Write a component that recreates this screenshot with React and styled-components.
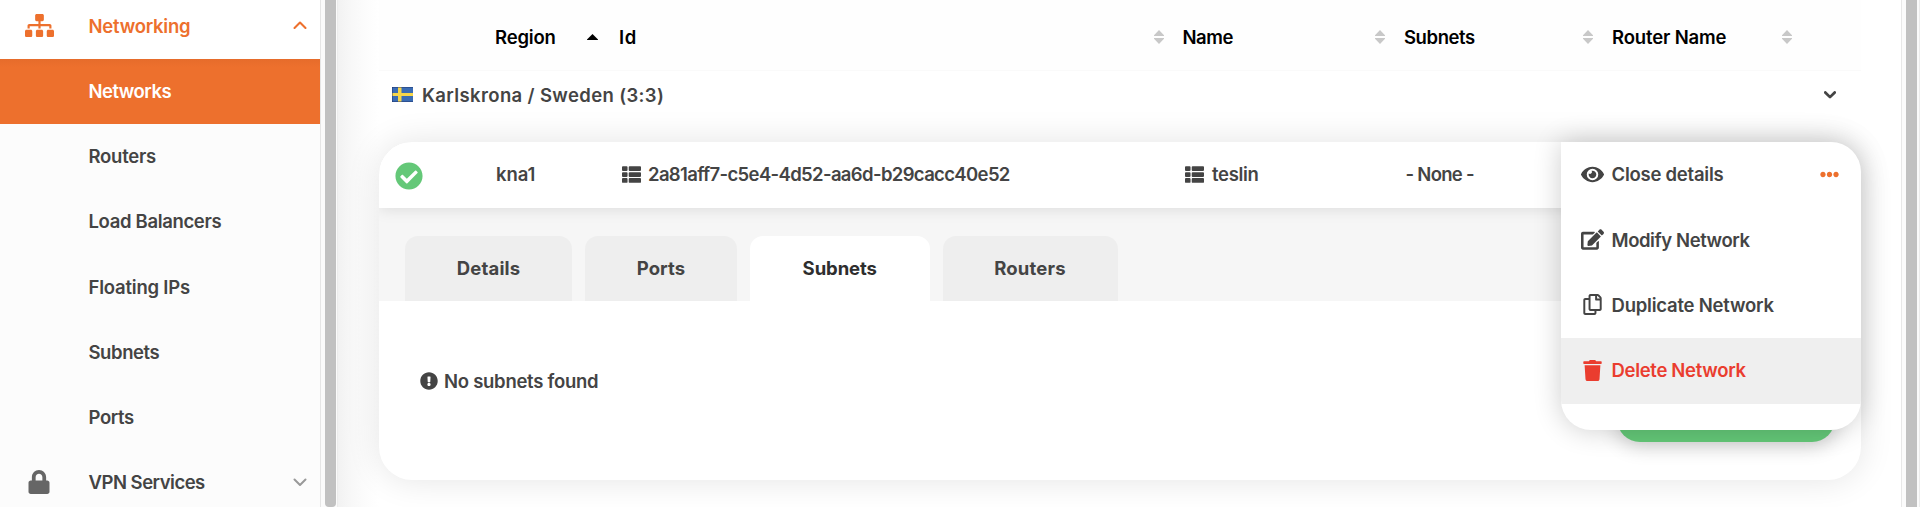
import React from "react";
import styled, { createGlobalStyle } from "styled-components";
import {
  FaSitemap, FaLock, FaThList, FaEye, FaEdit, FaRegCopy, FaTrash,
  FaExclamationCircle, FaEllipsisH, FaCheckCircle,
} from "react-icons/fa";

const Global = createGlobalStyle`
  * { box-sizing: border-box; }
  body { margin: 0; overflow: hidden; background: #fff; }
`;

const Page = styled.div`
  display: flex;
  width: 1920px;
  height: 507px;
  overflow: hidden;
  color: #444;
  font: 600 18.5px/24px Inter, "Liberation Sans", sans-serif;
`;

const Label = styled.span`
  white-space: nowrap;
  letter-spacing: ${(p) => p.$ls || 0}px;
`;

/* Sidebar */
const Sidebar = styled.nav`
  display: flex;
  flex-direction: column;
  flex: none;
  width: 321px;
  background: #fcfcfc;
  border-right: 1px solid #e6e6e6;
`;

const NavGroup = styled.div`
  display: grid;
  grid-template-columns: 88.5px 1fr 27px;
  align-items: center;
  flex: none;
  height: ${(p) => p.$height}px;
  padding-bottom: ${(p) => p.$bottom || 0}px;
  background: ${(p) => (p.$open ? "#fff" : "transparent")};
  color: ${(p) => (p.$open ? "#ed702d" : "#444")};
`;

const NavIcon = styled.span`
  display: flex;
  justify-content: center;
  padding-right: 10px;
  color: ${(p) => p.$color};
`;

const NavItem = styled.a`
  display: flex;
  align-items: center;
  flex: none;
  height: 65.3px;
  padding: 0 0 2px 88.5px;
  color: ${(p) => (p.$active ? "#fff" : "#444")};
  background: ${(p) =>
    p.$active ? "linear-gradient(#e66c2b, #ed702d 8px)" : "transparent"};
`;

/* Scroll bars */
const Track = styled.div`
  flex: none;
  width: ${(p) => p.$width}px;
  padding-left: 4px;
  background: #fbfbfb;
  border-left: ${(p) => (p.$edge ? "1px solid #e8e8e8" : "0")};
  border-right: 1px solid #ececec;
`;

const Thumb = styled.div`
  width: 11px;
  height: 100%;
  background: #c1c1c1;
  border-radius: ${(p) => (p.$rounded ? "0 0 4px 4px" : "0")};
`;

/* Main area */
const Main = styled.main`
  flex: 1;
  min-width: 0;
  padding: 0 40px 0 41px;
  background: linear-gradient(90deg, #f2f2f2, #f8f8f8 14px, #fcfcfc 28px, #fff 41px);
`;

const columns = "116px 124px 563.5px 221.5px 208px 1fr";

const HeadRow = styled.div`
  display: grid;
  grid-template-columns: ${columns};
  align-items: center;
  height: 71px;
  padding-top: 4px;
  color: #000;
  background: #fefefe;
  border-bottom: 1px solid #fafafa;
`;

const HeadCell = styled.div`
  display: flex;
  align-items: center;
  justify-content: space-between;
  padding-right: ${(p) => p.$pad}px;
`;

const RegionRow = styled.div`
  display: flex;
  align-items: center;
  justify-content: space-between;
  height: 71px;
  padding: 0 25px 24px 13px;
`;

const RegionName = styled.div`
  display: flex;
  align-items: center;
  gap: 9px;
`;

const Card = styled.section`
  position: relative;
  height: 338px;
  border-radius: 33px;
  background: #fff;
  box-shadow: 0 0 34px rgba(0, 0, 0, 0.11);
`;

const CardBody = styled.div`
  height: 338px;
  overflow: hidden;
  border-radius: 33px;
`;

const NetworkRow = styled.div`
  position: relative;
  display: grid;
  grid-template-columns: ${columns};
  align-items: center;
  height: 66px;
  background: #fff;
  box-shadow: 0 2px 14px rgba(0, 0, 0, 0.1);
`;

const Cell = styled.div`
  display: flex;
  align-items: center;
  gap: ${(p) => p.$gap || 8}px;
  padding: ${(p) => p.$top || 0}px 0 2px ${(p) => p.$left || 0}px;
`;

const Tabs = styled.div`
  display: flex;
  align-items: flex-end;
  gap: 13px;
  height: 93px;
  padding-left: 26px;
  background: #f6f6f6;
`;

const Tab = styled.button`
  width: ${(p) => p.$width}px;
  height: 65px;
  padding: 0 0 2px;
  border: 0;
  border-radius: 13px 13px 0 0;
  font: inherit;
  font-weight: 700;
  color: ${(p) => (p.$active ? "#2e2e2e" : "#444")};
  background: ${(p) => (p.$active ? "#fff" : "#eee")};
`;

const Panel = styled.div`
  display: flex;
  flex-direction: column;
  justify-content: space-between;
  height: 179px;
  padding: 68px 26.5px 38.5px 41px;
`;

const Empty = styled.div`
  display: flex;
  align-items: center;
  gap: 6px;
`;

const CreateButton = styled.button`
  align-self: flex-end;
  width: 218px;
  height: 46px;
  border: 0;
  border-radius: 23px;
  background: #64c878;
  box-shadow: 0 4px 20px rgba(0, 0, 0, 0.2);
`;

/* Row menu, floating over the card */
const Menu = styled.div`
  position: absolute;
  top: 0;
  right: 0;
  width: 300px;
  height: 287.5px;
  overflow: hidden;
  background: #fff;
  border-radius: 0 30px 30px 30px;
  box-shadow: 0 0 28px rgba(0, 0, 0, 0.2);
`;

const MenuItem = styled.div`
  display: grid;
  grid-template-columns: 24px 1fr auto;
  column-gap: 7px;
  align-items: center;
  height: 65.4px;
  padding: 0 22.5px 1px 19.5px;
  color: ${(p) => (p.$danger ? "#ea3d2f" : "#444")};
  background: ${(p) => (p.$danger ? "#efefef" : "transparent")};
`;

const MenuIcon = styled.span`
  display: flex;
  justify-content: center;
`;

const Chevron = ({ up, width, height, color, stroke }) => (
  <svg width={width} height={height} viewBox="0 0 14 9" fill="none" stroke={color}
    strokeWidth={stroke} strokeLinecap="round" strokeLinejoin="round">
    <path d={up ? "M1.500 7 7 1.500 12.500 7" : "M1.500 1.500 7 7 12.500 1.500"} />
  </svg>
);

const Sort = () => (
  <svg width="10" height="14" viewBox="0 0 10 14" fill="#c8c8c8">
    <path d="M5 0 10 5.200V6H0V5.200ZM5 14 0 8.800V8H10V8.800Z" />
  </svg>
);

const SortedUp = () => (
  <svg width="11" height="6" viewBox="0 0 11 6" fill="#000">
    <path d="M5.500 0 11 5.400V6H0V5.400Z" />
  </svg>
);

const Flag = () => (
  <svg width="21" height="15" viewBox="0 0 21 15">
    <rect width="21" height="15" fill="#3a6cb4" />
    <path d="M0 6H21V9H0ZM6 0H9.500V15H6Z" fill="#f6d64a" />
    <path d="M0 .5H21M0 14.500H21M.5 0V15" stroke="#1d2f66" strokeOpacity=".45" />
  </svg>
);

const items = [
  ["Networks", -0.5, true],
  ["Routers", -0.26],
  ["Load Balancers", -0.34],
  ["Floating IPs", -0.21],
  ["Subnets", -0.42],
  ["Ports", -0.4],
];

const tabs = [
  ["Details", 167, 0.16],
  ["Ports", 152, 0.07],
  ["Subnets", 179.5, -0.08, true],
  ["Routers", 175, 0.18],
];

export default function App() {
  return (
    <Page>
      <Global />
      <Sidebar>
        <NavGroup $height={59} $open $bottom={8}>
          <NavIcon $color="#ed702d"><FaSitemap size={29} /></NavIcon>
          <Label $ls={-0.24}>Networking</Label>
          <Chevron up width={14} height={9} color="#ed702d" stroke={2.1} />
        </NavGroup>
        {items.map(([name, ls, active]) => (
          <NavItem key={name} $active={active}><Label $ls={ls}>{name}</Label></NavItem>
        ))}
        <NavGroup $height={65} $bottom={2}>
          <NavIcon $color="#666"><FaLock size={24} /></NavIcon>
          <Label $ls={-0.5}>VPN Services</Label>
          <Chevron width={14} height={9} color="#999" stroke={2} />
        </NavGroup>
      </Sidebar>
      <Track $width={17}><Thumb $rounded /></Track>
      <Main>
        <HeadRow>
          <span />
          <HeadCell $pad={21}><Label $ls={-0.19}>Region</Label><SortedUp /></HeadCell>
          <HeadCell $pad={19}><Label $ls={0.6}>Id</Label><Sort /></HeadCell>
          <HeadCell $pad={19}><Label $ls={-0.44}>Name</Label><Sort /></HeadCell>
          <HeadCell $pad={19}><Label $ls={-0.42}>Subnets</Label><Sort /></HeadCell>
          <HeadCell $pad={69.5}><Label $ls={-0.15}>Router Name</Label><Sort /></HeadCell>
        </HeadRow>
        <RegionRow>
          <RegionName><Flag /><Label $ls={0.36}>Karlskrona / Sweden (3:3)</Label></RegionName>
          <Chevron width={12} height={8} color="#444" stroke={3.2} />
        </RegionRow>
        <Card>
          <CardBody>
            <NetworkRow>
              <Cell $left={16} $top={4}><FaCheckCircle size={28} color="#64c878" /></Cell>
              <Cell $left={1}><Label $ls={-0.08}>kna1</Label></Cell>
              <Cell $left={2.5} $gap={7.5}><FaThList size={19} /><Label $ls={-0.65}>2a81aff7-c5e4-4d52-aa6d-b29cacc40e52</Label></Cell>
              <Cell $left={2.5}><FaThList size={19} /><Label $ls={-0.33}>teslin</Label></Cell>
              <Cell $left={1.5}><Label $ls={-0.71}>- None -</Label></Cell>
            </NetworkRow>
            <Tabs>
              {tabs.map(([name, width, ls, active]) => (
                <Tab key={name} $width={width} $active={active}><Label $ls={ls}>{name}</Label></Tab>
              ))}
            </Tabs>
            <Panel>
              <Empty><FaExclamationCircle size={18} /><Label $ls={-0.27}>No subnets found</Label></Empty>
              <CreateButton aria-hidden="true" />
            </Panel>
          </CardBody>
          <Menu>
            <MenuItem>
              <MenuIcon><FaEye size={23} /></MenuIcon>
              <Label $ls={-0.24}>Close details</Label>
              <FaEllipsisH size={19} color="#ed702d" />
            </MenuItem>
            <MenuItem>
              <MenuIcon><FaEdit size={23} /></MenuIcon>
              <Label $ls={-0.42}>Modify Network</Label>
            </MenuItem>
            <MenuItem>
              <MenuIcon><FaRegCopy size={21} /></MenuIcon>
              <Label $ls={-0.22}>Duplicate Network</Label>
            </MenuItem>
            <MenuItem $danger>
              <MenuIcon><FaTrash size={21} /></MenuIcon>
              <Label $ls={-0.31}>Delete Network</Label>
            </MenuItem>
          </Menu>
        </Card>
      </Main>
      <Track $width={19} $edge><Thumb /></Track>
    </Page>
  );
}
